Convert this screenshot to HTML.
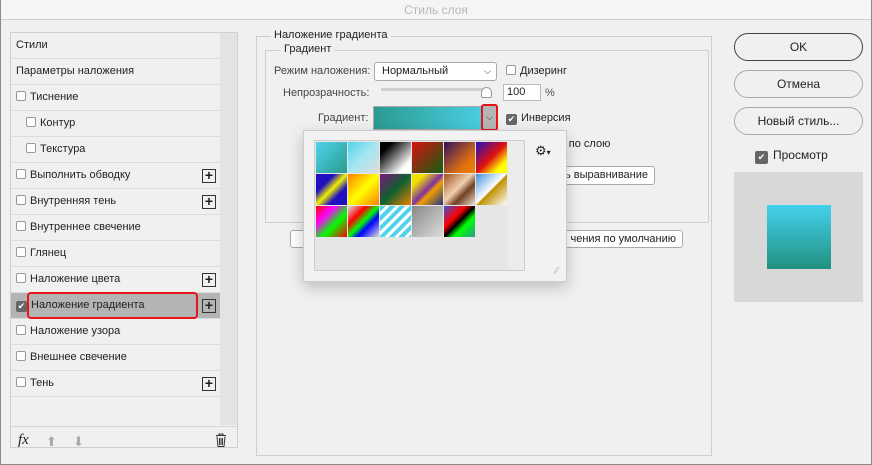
<!DOCTYPE html>
<html><head><meta charset="utf-8"><style>
*{box-sizing:border-box;margin:0;padding:0}
body{width:872px;height:465px;background:#f0f0f0;font-family:"Liberation Sans",sans-serif;font-size:11px;color:#222;position:relative;overflow:hidden}
.win{position:absolute;left:0;top:0;width:872px;height:465px;border:1px solid #8a8a8a;border-top:none}
.title{position:absolute;left:0;top:0;width:872px;height:20px;background:#f5f5f5;border-bottom:1px solid #cfcfcf;text-align:center;line-height:20px;color:#b8b8b8;font-size:12px}
.a{position:absolute}
.left{left:10px;top:32px;width:228px;height:416px;border:1px solid #cfcfcf;background:#f0f0f0}
.sb{left:220px;top:33px;width:17px;height:392px;background:#e3e3e3}
.row{position:absolute;left:11px;width:209px;height:26px;border-bottom:1px solid #dcdcdc;line-height:25px;padding-left:5px}
.cb{display:inline-block;width:10px;height:10px;border:1px solid #999;border-radius:2px;background:#fff;vertical-align:-1px;margin-right:4px}
.plus{position:absolute;right:4px;top:6px;width:14px;height:14px;border:1px solid #333;text-align:center;line-height:11px;font-size:14px;font-weight:bold}
.fs{border:1px solid #cfcfcf}
.leg{position:absolute;background:#f0f0f0;padding:0 3px;font-size:11px}
.btn{position:absolute;border:1px solid #aaa;border-radius:3px;background:#fff;text-align:center;font-size:11px}
.rb{position:absolute;left:734px;width:129px;height:28px;border:1px solid #aaa;border-radius:14px;text-align:center;line-height:26px;font-size:12px}
.sw{position:absolute;width:31px;height:31px}
.chk{display:inline-block;width:11px;height:11px;background:#666;border-radius:2px;color:#fff;font-size:9px;line-height:11px;text-align:center;vertical-align:-1px;margin-right:4px}
</style></head><body>
<div class="title">Стиль слоя</div>
<div class="win"></div>

<div class="a left"></div>
<div class="a sb"></div>
<div class="row" style="top:33px">Стили</div>
<div class="row" style="top:59px">Параметры наложения</div>
<div class="row" style="top:85px"><span class="cb"></span>Тиснение</div>
<div class="row" style="top:111px;padding-left:15px"><span class="cb"></span>Контур</div>
<div class="row" style="top:137px;padding-left:15px"><span class="cb"></span>Текстура</div>
<div class="row" style="top:163px"><span class="cb"></span>Выполнить обводку<span class="plus">+</span></div>
<div class="row" style="top:189px"><span class="cb"></span>Внутренняя тень<span class="plus">+</span></div>
<div class="row" style="top:215px"><span class="cb"></span>Внутреннее свечение</div>
<div class="row" style="top:241px"><span class="cb"></span>Глянец</div>
<div class="row" style="top:267px"><span class="cb"></span>Наложение цвета<span class="plus">+</span></div>
<div class="row" style="top:293px;background:#b4b4b4"><span class="chk" style="margin-right:4px">✔</span>Наложение градиента<span class="plus">+</span></div>
<div class="a" style="left:27px;top:292px;width:171px;height:27px;border:2.5px solid #e8141a;border-radius:4px"></div>
<div class="row" style="top:319px"><span class="cb"></span>Наложение узора</div>
<div class="row" style="top:345px"><span class="cb"></span>Внешнее свечение</div>
<div class="row" style="top:371px"><span class="cb"></span>Тень<span class="plus">+</span></div>
<div class="a" style="left:11px;top:426px;width:226px;height:1px;background:#d6d6d6"></div>
<div class="a" style="left:18px;top:432px;font-style:italic;font-family:'Liberation Serif',serif;font-size:15px">fx</div>
<div class="a" style="left:46px;top:434px;color:#aaa;font-size:13px">⬆</div>
<div class="a" style="left:73px;top:434px;color:#aaa;font-size:13px">⬇</div>
<svg class="a" style="left:215px;top:433px" width="12" height="14" viewBox="0 0 12 14"><path d="M1 2.5h10M4 2.5V1h4v1.5M2 3.5l1 10h6l1-10M4.5 5v7M6 5v7M7.5 5v7" stroke="#333" stroke-width="1" fill="none"/></svg>

<div class="a fs" style="left:256px;top:36px;width:456px;height:420px"></div>
<div class="leg" style="left:271px;top:29px">Наложение градиента</div>
<div class="a fs" style="left:265px;top:50px;width:444px;height:173px"></div>
<div class="leg" style="left:281px;top:43px">Градиент</div>

<div class="a" style="left:274px;top:65px;color:#444">Режим наложения:</div>
<div class="btn" style="left:374px;top:62px;width:123px;height:19px;text-align:left;padding-left:7px;line-height:17px">Нормальный<span style="position:absolute;right:5px;font-size:9px">⌵</span></div>
<div class="a" style="left:506px;top:65px"><span class="cb"></span>Дизеринг</div>
<div class="a" style="left:283px;top:87px;color:#444">Непрозрачность:</div>
<div class="a" style="left:381px;top:88px;width:106px;height:3px;background:#cfcfcf"></div>
<div class="a" style="left:481px;top:87px;width:11px;height:11px;background:#fff;border:1px solid #999;border-radius:6px 6px 2px 2px"></div>
<div class="a" style="left:503px;top:84px;width:38px;height:17px;background:#fff;border:1px solid #bbb;padding-left:3px;line-height:15px">100</div>
<div class="a" style="left:545px;top:87px;color:#555">%</div>
<div class="a" style="left:318px;top:112px;color:#444">Градиент:</div>
<div class="a" style="left:373px;top:106px;width:124px;height:24px;background:linear-gradient(90deg,#2a9a8f,#4fd4ec);border:1px solid #aaa"></div>
<div class="a" style="left:481px;top:104px;width:17px;height:27px;background:#b5b5b5;border:2.5px solid #e8141a;border-radius:3px;text-align:center;font-size:9px;line-height:22px">⌵</div>
<div class="a" style="left:506px;top:112px"><span class="chk">✔</span>Инверсия</div>
<div class="a" style="left:560px;top:138px">ь по слою</div>
<div class="btn" style="left:545px;top:166px;width:110px;height:19px;line-height:17px;text-align:right;padding-right:6px">ь выравнивание</div>
<div class="btn" style="left:290px;top:230px;width:20px;height:18px"></div>
<div class="btn" style="left:530px;top:230px;width:153px;height:18px;line-height:16px;text-align:right;padding-right:6px">чения по умолчанию</div>

<div class="a" style="left:303px;top:130px;width:264px;height:152px;background:#f2f2f2;border:1px solid #ccc;box-shadow:0 5px 14px rgba(0,0,0,.22)"></div>
<div class="a" style="left:314px;top:140px;width:211px;height:131px;background:#e6e6e6;border:1px solid #ccc"></div>
<div class="a" style="left:508px;top:141px;width:16px;height:129px;background:#ececec"></div>
<div class="a" style="left:535px;top:143px;font-size:13px">⚙<span style="font-size:8px">▾</span></div>
<div class="a" style="left:555px;top:266px;color:#bbb;font-size:10px">⁄⁄</div>

<div class="sw" style="left:316px;top:142px;background:linear-gradient(135deg,#4fd4ec,#2a9a8f)"></div>
<div class="sw" style="left:348px;top:142px;background:linear-gradient(135deg,#4fd4ec,#a8e6f0 50%,#ddd)"></div>
<div class="sw" style="left:380px;top:142px;background:linear-gradient(135deg,#000 20%,#fff 80%)"></div>
<div class="sw" style="left:412px;top:142px;background:linear-gradient(135deg,#d81010,#106010)"></div>
<div class="sw" style="left:444px;top:142px;background:linear-gradient(135deg,#301060,#e07010 70%,#f08000)"></div>
<div class="sw" style="left:476px;top:142px;background:linear-gradient(135deg,#2010c0,#e01010 50%,#ffff00 80%)"></div>
<div class="sw" style="left:316px;top:174px;background:linear-gradient(135deg,#2010c0 30%,#f0f000 50%,#2010c0 70%)"></div>
<div class="sw" style="left:348px;top:174px;background:linear-gradient(135deg,#ff8000,#ffff00 50%,#ff8000)"></div>
<div class="sw" style="left:380px;top:174px;background:linear-gradient(135deg,#801080,#106030 50%,#f08000)"></div>
<div class="sw" style="left:412px;top:174px;background:linear-gradient(135deg,#f0e000 20%,#8030a0 50%,#f0a000 60%,#203080)"></div>
<div class="sw" style="left:444px;top:174px;background:linear-gradient(135deg,#a05020,#f0d0b0 45%,#704020 65%,#f0e0d0)"></div>
<div class="sw" style="left:476px;top:174px;background:linear-gradient(135deg,#4090e0,#fff 48%,#c09000 52%,#fff)"></div>
<div class="sw" style="left:316px;top:206px;background:linear-gradient(135deg,#ff0000,#ff00ff 30%,#00ff00 60%,#ff0000)"></div>
<div class="sw" style="left:348px;top:206px;background:linear-gradient(135deg,#ddd,#ff0000 30%,#00ff00 50%,#0000ff 65%,#ddd)"></div>
<div class="sw" style="left:380px;top:206px;background:repeating-linear-gradient(135deg,#4fd4ec 0 4px,#fff 4px 7px)"></div>
<div class="sw" style="left:412px;top:206px;background:linear-gradient(135deg,#888,#ddd)"></div>
<div class="sw" style="left:444px;top:206px;background:linear-gradient(135deg,#4050d0,#ff0000 35%,#000 50%,#00ff00 65%,#2a9a8f)"></div>

<div class="rb" style="top:33px;border:1px solid #444">OK</div>
<div class="rb" style="top:70px">Отмена</div>
<div class="rb" style="top:107px">Новый стиль...</div>
<div class="a" style="left:755px;top:148px;font-size:12px"><span class="chk" style="width:13px;height:13px;line-height:13px;margin-right:5px">✔</span>Просмотр</div>
<div class="a" style="left:734px;top:172px;width:129px;height:130px;background:#d8d8d8"></div>
<div class="a" style="left:767px;top:205px;width:64px;height:64px;background:linear-gradient(180deg,#44d2ee,#22907f)"></div>
</body></html>
